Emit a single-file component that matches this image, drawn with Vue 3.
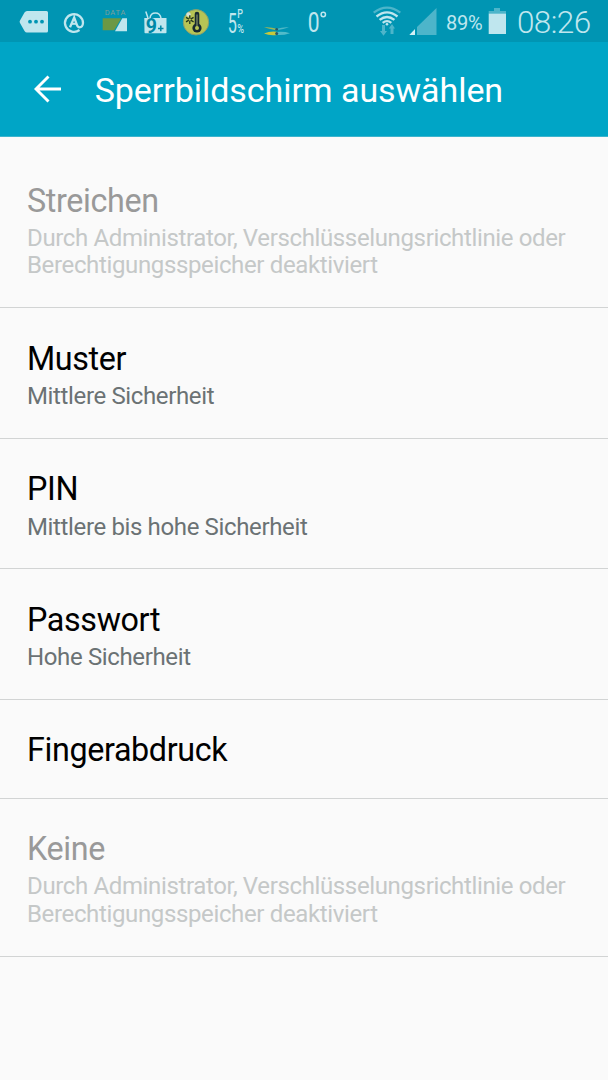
<script setup>
import { ref } from 'vue';

const disabledText = 'Durch Administrator, Verschlüsselungsrichtlinie oder Berechtigungsspeicher deaktiviert';

const options = ref([
  { title: 'Streichen', summary: disabledText, disabled: true },
  { title: 'Muster', summary: 'Mittlere Sicherheit' },
  { title: 'PIN', summary: 'Mittlere bis hohe Sicherheit' },
  { title: 'Passwort', summary: 'Hohe Sicherheit' },
  { title: 'Fingerabdruck' },
  { title: 'Keine', summary: disabledText, disabled: true },
]);
</script>

<template>
  <div class="screen">
    <div class="statusbar">
      <!-- message -->
      <svg width="60" height="42" viewBox="0 0 60 42">
        <path d="M27 11H46.500Q48 11 48 12.500V31Q48 32.500 46.500 32.500H27Q25.500 32.500 24.500 31L20 23Q19.200 21.700 20 20.400L24.500 12.500Q25.500 11 27 11Z" fill="#bfe6ee" />
        <g fill="#0095b3">
          <circle cx="30" cy="21.700" r="1.900" />
          <circle cx="36" cy="21.700" r="1.900" />
          <circle cx="42" cy="21.700" r="1.900" />
        </g>
      </svg>
      <!-- mail account -->
      <svg width="35" height="42" viewBox="60 0 35 42">
        <g fill="none" stroke="#bfe6ee">
          <path d="M79.500 30A9 8.900 0 1 1 83 23Q82.700 27.300 79.500 27.300Q77.700 27.300 76.800 24.600L74.200 17.500L70 27.300" stroke-width="2.300" />
          <path d="M72 23.800H77" stroke-width="2" />
        </g>
      </svg>
      <!-- data usage -->
      <svg width="40" height="42" viewBox="95 0 40 42">
        <text x="104.800" y="14.800" class="data-label" textLength="20.500">DATA</text>
        <path d="M102.700 18.200H121.300L114.200 30.300H102.700Z" fill="#6c9845" />
        <path d="M122.300 18.200H127V31.200H115Z" fill="#bfe6ee" />
      </svg>
      <!-- shop updates -->
      <svg width="40" height="42" viewBox="135 0 40 42">
        <path d="M150 18Q150.500 13 155.500 13Q160 13 161 18M145.800 11.500L148 18" fill="none" stroke="#bfe6ee" stroke-width="1.500" />
        <path d="M144.300 18H166.500V32.500Q166.500 33.300 165.500 33.300H145.300Q144.500 33.300 144.500 32.500Z" fill="#bfe6ee" />
        <text x="145.800" y="32.600" class="shop-count">9</text>
        <path d="M158 28.400H163.500M160.800 25.600V31.200" stroke="#0088a6" stroke-width="1.500" />
      </svg>
      <!-- thermometer -->
      <svg width="40" height="42" viewBox="175 0 40 42">
        <circle cx="196" cy="22.300" r="12.700" fill="#b7c455" stroke="#869f71" stroke-width="1" />
        <circle cx="188.500" cy="14.500" r="2.200" fill="#d5e1d5" />
        <path d="M189.800 15.300V24M186 17.400L193.600 21.900M193.600 17.400L186 21.900" stroke="#25371f" stroke-width="1.300" />
        <circle cx="189.800" cy="19.600" r="1.200" fill="#b7c455" />
        <path d="M197 14V28" stroke="#172930" stroke-width="4.600" stroke-linecap="round" />
        <circle cx="197" cy="28" r="4.600" fill="#172930" />
        <path d="M197 14.500V27" stroke="#8b9970" stroke-width="1.100" />
        <circle cx="197" cy="28" r="2" fill="#b7c455" />
      </svg>
      <!-- rain chance -->
      <svg width="40" height="42" viewBox="215 0 40 42">
        <text transform="translate(227.800 32.500) scale(0.58 1)" class="weather">5</text>
        <text transform="translate(237.300 17.700) scale(0.72 1)" class="weather small">P</text>
        <text transform="translate(237.300 32.500) scale(0.74 1)" class="weather small">%</text>
      </svg>
      <!-- wind -->
      <svg width="45" height="42" viewBox="255 0 45 42">
        <path d="M264 27.300Q271 26.700 276.500 28.700L275 30Q269 28.800 264 27.300Z" fill="#a0b653" />
        <path d="M277 28.700Q283 26.700 289 27.300Q283 29.300 278 30Z" fill="#4fb8c7" />
        <path d="M264 33.500Q270 31 276.500 31.800L277 35Q269 35.800 264 33.500Z" fill="#c5c83d" />
        <path d="M277 32Q284 31.300 290 33.200Q283 35.500 277 35Z" fill="#52bbc9" />
        <circle cx="276.700" cy="29.300" r="1.300" fill="#28586a" />
        <circle cx="276.700" cy="33.500" r="1.500" fill="#28586a" />
      </svg>
      <!-- temperature -->
      <svg width="40" height="42" viewBox="300 0 40 42">
        <text transform="translate(307.800 32.300) scale(0.75 1)" class="weather">0</text>
        <circle cx="323.300" cy="14.500" r="2.200" fill="none" stroke="#bfe6ee" stroke-width="1.500" />
      </svg>
      <!-- wifi -->
      <svg width="65" height="42" viewBox="340 0 65 42">
        <g fill="none" stroke-width="2.300">
          <path d="M373.700 12.700Q387 2.500 400.300 12.700" stroke="#4db5ca" />
          <path d="M376.500 16.500Q387 8.300 397.500 16.500" stroke="#bfe6ee" />
          <path d="M379.600 19.900Q387 14 394.400 19.900" stroke="#bfe6ee" />
          <path d="M382.700 22.900Q387 19.400 391.300 22.900" stroke="#bfe6ee" />
        </g>
        <circle cx="387" cy="24.200" r="1.300" fill="#bfe6ee" />
        <path d="M382 25H385V31H387L383.500 35.700L380 31H382ZM390.500 34H393.500V28.500H395L392 24L388.800 28.500H390.500Z" fill="#4db5ca" />
      </svg>
      <!-- signal -->
      <svg width="41" height="42" viewBox="405 0 41 42">
        <path d="M409.300 35L415 29V35Z" fill="#d5eff4" />
        <path d="M417 27L436.500 8V35H417Z" fill="#4db5ca" />
      </svg>
      <span class="percent">89%</span>
      <!-- battery -->
      <svg width="30" height="42" viewBox="484 0 30 42">
        <path d="M494 8H500V11H506V14H488.700V11H494Z" fill="#4db5ca" />
        <path d="M488.700 13.700H506V34H488.700Z" fill="#bfe6ee" />
      </svg>
      <span class="clock">08:26</span>
    </div>

    <header class="actionbar">
      <svg class="back" width="28" height="28" viewBox="0 0 28 28">
        <path d="M14.500 1.500L2 14L14.500 26.500M2.500 14H27" fill="none" stroke="#fff" stroke-width="2.900" />
      </svg>
      <h1>Sperrbildschirm auswählen</h1>
    </header>

    <ul class="options">
      <li v-for="option in options" :key="option.title" :class="{ disabled: option.disabled }">
        <span class="title">{{ option.title }}</span>
        <span v-if="option.summary" class="summary">{{ option.summary }}</span>
      </li>
    </ul>
  </div>
</template>

<style>
  body {
    margin: 0;
    background-color: #fafafa;
  }
</style>

<style scoped>
  .screen {
    width: 608px;
    height: 1080px;
    overflow: hidden;
    background-color: #fafafa;
    font-family: Roboto, sans-serif;
  }

  .statusbar {
    display: flex;
    height: 42px;
    background-color: #0095b3;
    color: #bfe6ee;
  }

  .statusbar svg {
    flex: none;
  }

  .data-label {
    font-size: 7.5px;
    fill: #7f9f98;
  }

  .shop-count {
    font-size: 19.5px;
    font-weight: 700;
    fill: #0088a6;
  }

  .weather {
    font-size: 28px;
    fill: #bfe6ee;
  }

  .weather.small {
    font-size: 12.5px;
    font-weight: 500;
  }

  .percent {
    width: 38px;
    font-size: 20px;
    line-height: 46px;
    letter-spacing: -0.3px;
    white-space: nowrap;
  }

  .clock {
    margin-left: 3px;
    font-size: 31.5px;
    font-weight: 300;
    line-height: 46px;
    letter-spacing: -0.6px;
    white-space: nowrap;
  }

  .actionbar {
    display: flex;
    align-items: center;
    box-sizing: border-box;
    height: 95px;
    padding-left: 33.5px;
    border-bottom: 1px solid #3cb4cd;
    background-color: #00a5c6;
    color: #fff;
  }

  .actionbar h1 {
    margin: 2px 0 0 33.2px;
    font-size: 34px;
    font-weight: 400;
    letter-spacing: -0.06px;
    white-space: nowrap;
  }

  .options {
    margin: 0;
    padding: 13px 0 0;
    list-style: none;
  }

  .options li {
    display: flex;
    flex-direction: column;
    padding: 31.5px 27px 27.1px;
    border-bottom: 1px solid #d2d4d4;
    color: #000;
  }

  .title {
    font-size: 32.3px;
    line-height: 39px;
    letter-spacing: -0.37px;
  }

  .summary {
    margin-top: 4.4px;
    font-size: 24px;
    line-height: 27.6px;
    letter-spacing: -0.36px;
    color: #6b7274;
  }

  .disabled .title {
    color: #999;
  }

  .disabled .summary {
    color: #c5c8c8;
  }
</style>
